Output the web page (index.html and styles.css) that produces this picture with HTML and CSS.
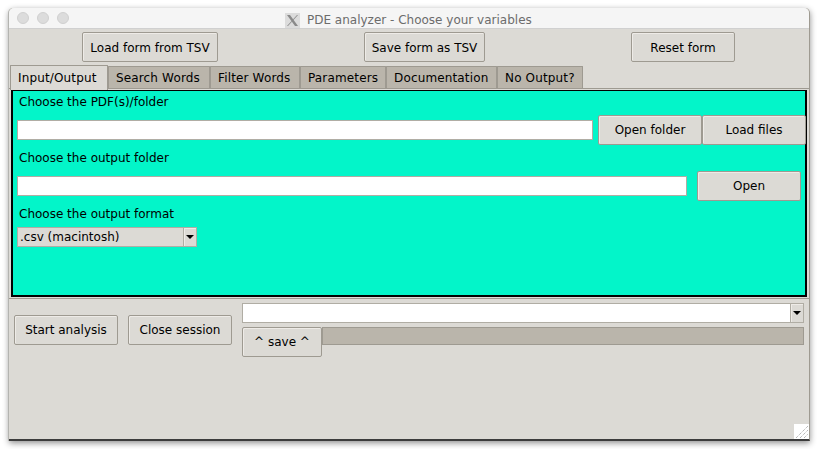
FILE: index.html
```html
<!DOCTYPE html>
<html lang="en">
<head>
    <meta charset="UTF-8">
    <title>PDE analyzer - Choose your variables</title>
    <link rel="stylesheet" href="styles.css">
</head>
<body>
    <div class="window">
        <div class="titlebar">
            <div class="lights"><span></span><span></span><span></span></div>
            <div class="title">
                <svg class="x-icon" width="15" height="15" viewBox="0 0 15 15">
                    <rect width="15" height="15" fill="#dcdcdc"/>
                    <path d="M2 2h3l8 11h-3zM12 2h1L3 13H2z" fill="#8a8a8a"/>
                </svg>
                <span>PDE analyzer - Choose your variables</span>
            </div>
        </div>

        <div class="form-actions">
            <button class="btn btn-load">Load form from TSV</button>
            <button class="btn btn-save">Save form as TSV</button>
            <button class="btn btn-reset">Reset form</button>
        </div>

        <div class="tabs">
            <div class="tab active">Input/Output</div>
            <div class="tab tab-search">Search Words</div>
            <div class="tab tab-filter">Filter Words</div>
            <div class="tab tab-params">Parameters</div>
            <div class="tab tab-docs">Documentation</div>
            <div class="tab tab-none">No Output?</div>
        </div>

        <div class="tab-body">
            <div class="panel">
                <div class="label label-first">Choose the PDF(s)/folder</div>
                <div class="row">
                    <div class="entry entry-pdf"></div>
                    <button class="btn btn-side">Open folder</button>
                    <button class="btn btn-side">Load files</button>
                </div>
                <div class="label">Choose the output folder</div>
                <div class="row">
                    <div class="entry entry-out"></div>
                    <button class="btn btn-side">Open</button>
                </div>
                <div class="label">Choose the output format</div>
                <div class="combo">
                    <div class="combo-text">.csv (macintosh)</div>
                    <div class="combo-arrow"><i></i></div>
                </div>
            </div>
        </div>

        <div class="bottom">
            <button class="btn btn-start">Start analysis</button>
            <button class="btn btn-close">Close session</button>
            <div class="save-area">
                <div class="combo combo-wide">
                    <div class="combo-text"></div>
                    <div class="combo-arrow"><i></i></div>
                </div>
                <div class="save-row">
                    <button class="btn btn-caret">^ save ^</button>
                    <div class="progress"></div>
                </div>
            </div>
        </div>

        <svg class="grip" width="15" height="15" viewBox="0 0 15 15">
            <rect width="15" height="15" fill="#fff"/>
            <path d="M2 14L14 2M6 14L14 6M10 14L14 10" stroke="#999" stroke-width="1" stroke-dasharray="1 1"/>
        </svg>
    </div>
</body>
</html>
```

FILE: styles.css
```css
body {
    margin: 0;
    padding: 8px 9px;
    background-color: #fff;
    font-family: "DejaVu Sans", sans-serif;
    font-size: 12px;
    color: #000;
    overflow: hidden;
}

.window {
    position: relative;
    width: 801px;
    height: 433px;
    box-sizing: border-box;
    background-color: #dcdad5;
    border-radius: 5px 5px 0 0;
    border-right: 1px solid #9e9a91;
    border-bottom: 2px solid #3c3c3c;
    box-shadow: -1px 0 0 #b4b4b0, 0 2px 6px rgba(0, 0, 0, 0.45);
}

.titlebar {
    display: flex;
    align-items: center;
    height: 21px;
    background-color: #f5f5f5;
    border-radius: 5px 5px 0 0;
    border-bottom: 1px solid #d0d0d0;
    box-sizing: border-box;
    position: relative;
}

.lights {
    display: flex;
    gap: 8px;
    padding-left: 8px;
}

.lights span {
    width: 12px;
    height: 12px;
    border-radius: 50%;
    background-color: #dcdcdc;
    border: 1px solid #d0d0d0;
    box-sizing: border-box;
}

.title {
    position: absolute;
    left: 276px;
    top: 4px;
    display: flex;
    align-items: center;
    gap: 7px;
    color: #6c6c6c;
    line-height: 15px;
}

.title span {
    padding-top: 1px;
}

.btn {
    box-sizing: border-box;
    height: 30px;
    padding: 0;
    font: inherit;
    color: #000;
    background-color: #dcdad5;
    border: 1px solid #9e9a91;
    border-radius: 2px;
    box-shadow: inset 1px 1px 0 #eeebe7;
    flex-shrink: 0;
}

.form-actions {
    display: flex;
    padding-top: 3px;
    height: 33px;
}

.form-actions .btn {
    padding-top: 1px;
}

.btn-load { width: 136px; margin-left: 73px; }
.btn-save { width: 121px; margin-left: 146px; }
.btn-reset { width: 104px; margin-left: 146px; }

.tabs {
    display: flex;
    height: 23px;
    padding-left: 1px;
    position: relative;
    z-index: 1;
}

.tab {
    box-sizing: border-box;
    height: 22px;
    margin-top: 1px;
    line-height: 22px;
    padding-left: 7px;
    letter-spacing: 0.15px;
    background-color: #bab5ab;
    border: 1px solid #9e9a91;
    border-bottom: 0;
    border-radius: 1px 1px 0 0;
    flex-shrink: 0;
}

.tab.active {
    height: 25px;
    margin-top: 0;
    width: 98px;
    line-height: 25px;
    background-color: #dcdad5;
}

.tab-search { width: 102px; }
.tab-filter { width: 90px; }
.tab-params { width: 86px; }
.tab-docs { width: 111px; }
.tab-none { width: 86px; }

.tab-body {
    height: 211px;
    box-sizing: border-box;
    padding: 1px 2px;
    border-top: 1px solid #9e9a91;
    border-bottom: 1px solid #9e9a91;
}

.panel {
    box-sizing: border-box;
    height: 207px;
    width: 796px;
    background-color: #03f5c9;
    border: 2px solid #000;
    border-width: 1px 2px 2px 2px;
    padding-left: 4px;
}

.label {
    height: 26px;
    line-height: 26px;
    padding-left: 2px;
}

.label-first {
    height: 24px;
    line-height: 23px;
}

.row {
    display: flex;
    align-items: center;
    height: 30px;
}

.entry {
    box-sizing: border-box;
    height: 20px;
    background-color: #fff;
    border: 1px solid #b0ada4;
    flex-shrink: 0;
}

.entry-pdf { width: 576px; margin-right: 5px; }
.entry-out { width: 670px; margin-right: 10px; }

.btn-side { width: 104px; }

.combo {
    display: flex;
    box-sizing: border-box;
    width: 180px;
    height: 20px;
    border: 1px solid #b0ada4;
}

.combo-text {
    flex: 1;
    padding-left: 2px;
    line-height: 19px;
    background-color: #dcdad5;
}

.combo-arrow {
    width: 12px;
    display: flex;
    align-items: center;
    justify-content: center;
    background-color: #dcdad5;
    border-left: 1px solid #b0ada4;
    box-shadow: inset 1px 1px 0 #eeebe7;
}

.combo-arrow i {
    width: 0;
    height: 0;
    border-left: 4px solid transparent;
    border-right: 4px solid transparent;
    border-top: 4px solid #000;
}

.bottom {
    display: flex;
    padding: 4px 0 0 5px;
}

.btn-start { width: 104px; margin-top: 12px; }
.btn-close { width: 104px; margin-top: 12px; margin-left: 10px; }

.save-area {
    margin-left: 10px;
    width: 562px;
}

.combo-wide {
    width: 562px;
}

.combo-wide .combo-text {
    background-color: #fff;
}

.save-row {
    display: flex;
    margin-top: 4px;
}

.btn-caret { width: 80px; }

.progress {
    flex: 1;
    height: 18px;
    box-sizing: border-box;
    background-color: #bab5ab;
    border: 1px solid #9e9a91;
}

.grip {
    position: absolute;
    right: 0;
    bottom: 0;
}
```
